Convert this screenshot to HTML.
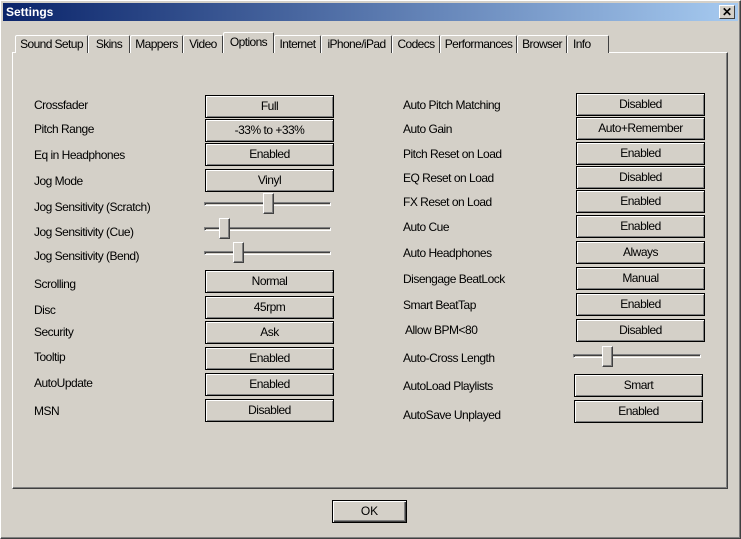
<!DOCTYPE html>
<html><head><meta charset="utf-8"><style>
*{margin:0;padding:0;box-sizing:border-box}
body{width:741px;height:539px;background:#d4d0c8;font-family:"Liberation Sans",sans-serif;font-size:12px;color:#000;position:relative;overflow:hidden}
.win{position:absolute;left:0;top:0;width:741px;height:539px;border:1px solid;border-color:#fff #404040 #404040 #fff;box-shadow:inset -1px -1px #808080}
.title{position:absolute;left:3px;top:3px;width:735px;height:18px;background:linear-gradient(to right,#0a246a,#a6caf0);color:#fff;font-weight:bold;font-size:12px;line-height:18px;padding-left:3px}
.x{position:absolute;right:3px;top:2px;width:16px;height:14px;background:#d4d0c8;border:1px solid;border-color:#fff #404040 #404040 #fff;color:#000;font-size:12px;line-height:12px;text-align:center;font-weight:bold}
.tab{position:absolute;top:35px;height:18px;border:1px solid;border-bottom:none;border-color:#fff #404040 #fff #fff;border-radius:2px 2px 0 0;text-align:center;line-height:16px;background:#d4d0c8;letter-spacing:-0.6px}
.tab.sel{top:32px;height:21px;z-index:2;line-height:18px}
.panel{position:absolute;left:12px;top:52px;width:716px;height:437px;border:1px solid;border-color:#fff #404040 #404040 #fff;box-shadow:inset -1px -1px #808080}
.l{position:absolute;line-height:14px;letter-spacing:-0.5px}
.b{position:absolute;width:129px;height:23px;border:1px solid #000;box-shadow:inset 1px 1px #fff,inset -1px -1px #808080;text-align:center;line-height:20px;letter-spacing:-0.5px}
.tr{position:absolute;height:4px;border:1px solid;border-color:#808080 #fff #fff #808080;background:#d4d0c8;box-shadow:inset 1px 1px #404040}
.th{position:absolute;width:11px;height:21px;background:#d4d0c8;border:1px solid;border-color:#fff #404040 #404040 #fff;box-shadow:inset -1px -1px #808080}
.ok{position:absolute;left:332px;top:500px;width:75px;height:23px;border:1px solid #000;box-shadow:inset 1px 1px #fff,inset -1px -1px #404040,inset -2px -2px #808080;text-align:center;line-height:20px}
</style></head><body>
<div class="win"></div>
<div class="title">Settings<div class="x">✕</div></div>
<div class="panel"></div>
<div class="tab" style="left:15px;width:73px">Sound Setup</div>
<div class="tab" style="left:88px;width:42px">Skins</div>
<div class="tab" style="left:130px;width:53px">Mappers</div>
<div class="tab" style="left:183px;width:40px">Video</div>
<div class="tab sel" style="left:223px;width:51px">Options</div>
<div class="tab" style="left:274px;width:47px">Internet</div>
<div class="tab" style="left:321px;width:71px">iPhone/iPad</div>
<div class="tab" style="left:392px;width:48px">Codecs</div>
<div class="tab" style="left:440px;width:77px">Performances</div>
<div class="tab" style="left:517px;width:50px">Browser</div>
<div class="tab" style="left:567px;width:42px;text-align:left;padding-left:5px">Info</div>

<div class="l" style="left:34px;top:98px">Crossfader</div><div class="b" style="left:205px;top:95px">Full</div>
<div class="l" style="left:34px;top:122px">Pitch Range</div><div class="b" style="left:205px;top:119px">-33% to +33%</div>
<div class="l" style="left:34px;top:148px">Eq in Headphones</div><div class="b" style="left:205px;top:143px">Enabled</div>
<div class="l" style="left:34px;top:174px">Jog Mode</div><div class="b" style="left:205px;top:169px">Vinyl</div>
<div class="l" style="left:34px;top:200px">Jog Sensitivity (Scratch)</div><div class="tr" style="left:204px;top:202px;width:127px"></div><div class="th" style="left:263px;top:193px"></div>
<div class="l" style="left:34px;top:225px">Jog Sensitivity (Cue)</div><div class="tr" style="left:204px;top:227px;width:127px"></div><div class="th" style="left:219px;top:218px"></div>
<div class="l" style="left:34px;top:249px">Jog Sensitivity (Bend)</div><div class="tr" style="left:204px;top:251px;width:127px"></div><div class="th" style="left:233px;top:242px"></div>
<div class="l" style="left:34px;top:277px">Scrolling</div><div class="b" style="left:205px;top:270px">Normal</div>
<div class="l" style="left:34px;top:303px">Disc</div><div class="b" style="left:205px;top:296px">45rpm</div>
<div class="l" style="left:34px;top:325px">Security</div><div class="b" style="left:205px;top:321px">Ask</div>
<div class="l" style="left:34px;top:350px">Tooltip</div><div class="b" style="left:205px;top:347px">Enabled</div>
<div class="l" style="left:34px;top:376px">AutoUpdate</div><div class="b" style="left:205px;top:373px">Enabled</div>
<div class="l" style="left:34px;top:404px">MSN</div><div class="b" style="left:205px;top:399px">Disabled</div>

<div class="l" style="left:403px;top:98px">Auto Pitch Matching</div><div class="b" style="left:576px;top:93px">Disabled</div>
<div class="l" style="left:403px;top:122px">Auto Gain</div><div class="b" style="left:576px;top:117px">Auto+Remember</div>
<div class="l" style="left:403px;top:147px">Pitch Reset on Load</div><div class="b" style="left:576px;top:142px">Enabled</div>
<div class="l" style="left:403px;top:171px">EQ Reset on Load</div><div class="b" style="left:576px;top:166px">Disabled</div>
<div class="l" style="left:403px;top:195px">FX Reset on Load</div><div class="b" style="left:576px;top:190px">Enabled</div>
<div class="l" style="left:403px;top:220px">Auto Cue</div><div class="b" style="left:576px;top:215px">Enabled</div>
<div class="l" style="left:403px;top:246px">Auto Headphones</div><div class="b" style="left:576px;top:241px">Always</div>
<div class="l" style="left:403px;top:272px">Disengage BeatLock</div><div class="b" style="left:576px;top:267px">Manual</div>
<div class="l" style="left:403px;top:298px">Smart BeatTap</div><div class="b" style="left:576px;top:293px">Enabled</div>
<div class="l" style="left:405px;top:323px">Allow BPM&lt;80</div><div class="b" style="left:576px;top:319px">Disabled</div>
<div class="l" style="left:403px;top:351px">Auto-Cross Length</div><div class="tr" style="left:573px;top:354px;width:128px"></div><div class="th" style="left:602px;top:346px"></div>
<div class="l" style="left:403px;top:379px">AutoLoad Playlists</div><div class="b" style="left:574px;top:374px">Smart</div>
<div class="l" style="left:403px;top:408px">AutoSave Unplayed</div><div class="b" style="left:574px;top:400px">Enabled</div>

<div class="ok">OK</div>
</body></html>
